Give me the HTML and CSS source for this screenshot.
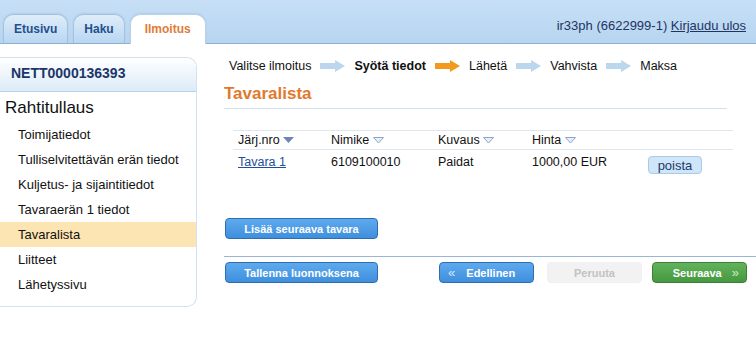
FILE: index.html
```html
<!DOCTYPE html>
<html lang="fi">
<head>
  <meta charset="UTF-8">
  <title>Ilmoitus - Tavaralista</title>
  <link rel="stylesheet" href="styles.css">
</head>
<body>
  <div class="topbar">
    <div class="tabs">
      <div class="tab">Etusivu</div>
      <div class="tab">Haku</div>
      <div class="tab active">Ilmoitus</div>
    </div>
    <div class="user">ir33ph (6622999-1) <a href="#">Kirjaudu ulos</a></div>
  </div>

  <div class="page">
    <div class="sidebar">
      <div class="side-head">NETT0000136393</div>
      <div class="side-title">Rahtitullaus</div>
      <ul class="side-list">
        <li>Toimijatiedot</li>
        <li>Tulliselvitettävän erän tiedot</li>
        <li>Kuljetus- ja sijaintitiedot</li>
        <li>Tavaraerän 1 tiedot</li>
        <li class="current">Tavaralista</li>
        <li>Liitteet</li>
        <li>Lähetyssivu</li>
      </ul>
    </div>

    <div class="main">
      <div class="steps">
        <span>Valitse ilmoitus</span>
        <svg class="arrow" width="25" height="12" viewBox="0 0 25 12"><polygon points="0,3 15,3 15,0 25,6 15,12 15,9 0,9" fill="#bcd6ee"/></svg>
        <span class="now">Syötä tiedot</span>
        <svg class="arrow" width="25" height="12" viewBox="0 0 25 12"><polygon points="0,3 15,3 15,0 25,6 15,12 15,9 0,9" fill="#f29a1c"/></svg>
        <span>Lähetä</span>
        <svg class="arrow" width="25" height="12" viewBox="0 0 25 12"><polygon points="0,3 15,3 15,0 25,6 15,12 15,9 0,9" fill="#bcd6ee"/></svg>
        <span>Vahvista</span>
        <svg class="arrow" width="25" height="12" viewBox="0 0 25 12"><polygon points="0,3 15,3 15,0 25,6 15,12 15,9 0,9" fill="#bcd6ee"/></svg>
        <span>Maksa</span>
      </div>

      <h2 class="title">Tavaralista</h2>

      <table class="goods">
        <thead>
          <tr>
            <th class="c1">Järj.nro <svg width="11" height="7" viewBox="0 0 11 7"><polygon points="0,0 11,0 5.5,6" fill="#6d86b8"/></svg></th>
            <th class="c2">Nimike <svg width="11" height="7" viewBox="0 0 11 7"><polygon points="0.5,0.5 10.5,0.5 5.5,6" fill="#e9eff8" stroke="#8ea5cb"/></svg></th>
            <th class="c3">Kuvaus <svg width="11" height="7" viewBox="0 0 11 7"><polygon points="0.5,0.5 10.5,0.5 5.5,6" fill="#e9eff8" stroke="#8ea5cb"/></svg></th>
            <th class="c4">Hinta <svg width="11" height="7" viewBox="0 0 11 7"><polygon points="0.5,0.5 10.5,0.5 5.5,6" fill="#e9eff8" stroke="#8ea5cb"/></svg></th>
            <th></th>
          </tr>
        </thead>
        <tbody>
          <tr>
            <td><a href="#">Tavara 1</a></td>
            <td>6109100010</td>
            <td>Paidat</td>
            <td>1000,00 EUR</td>
            <td><button class="small">poista</button></td>
          </tr>
        </tbody>
      </table>

      <button class="btn blue wide add">Lisää seuraava tavara</button>

      <div class="actions">
        <button class="btn blue wide">Tallenna luonnoksena</button>
        <button class="btn blue nav prev"><span class="chev">«</span> Edellinen</button>
        <button class="btn off nav">Peruuta</button>
        <button class="btn green nav next">Seuraava <span class="chev">»</span></button>
      </div>
    </div>
  </div>
</body>
</html>
```

FILE: styles.css
```css
body { margin: 0; font-family: "Liberation Sans", Arial, sans-serif; font-size: 13px; color: #111; background: #fff; }

.topbar { height: 43px; display: flex; align-items: flex-end; justify-content: space-between; background: linear-gradient(#c6dff6, #b7d5f1); border-bottom: 1px solid #8eafd0; }
.tabs { display: flex; gap: 5px; padding-left: 3px; margin-bottom: -1px; }
.tab { height: 28px; line-height: 28px; padding: 0 10px; font-size: 12px; font-weight: bold; color: #234f8c; background: linear-gradient(#dfedf9, #b9d6f1); border: 1px solid #a3c2df; border-bottom: none; border-radius: 10px 10px 0 0; box-shadow: 0 -1px 2px #0001; }
.tab.active { background: #fff; color: #e07b39; padding: 0 14px 1px; border-color: #b7d1ea; }
.user { align-self: center; margin-top: 8px; padding-right: 10px; color: #1f3561; }
.user a { color: #1f3561; }

.page { display: flex; }

.sidebar { width: 196px; margin-top: 13px; border: 1px solid #d3e2f0; border-left: none; border-radius: 0 10px 10px 0; padding-bottom: 9px; align-self: flex-start; }
.side-head { height: 33px; line-height: 31px; padding-left: 11px; font-size: 14px; font-weight: bold; color: #1b3768; background: linear-gradient(#fff, #dcebf8); border-bottom: 1px solid #b9d3ea; border-radius: 0 10px 0 0; }
.side-title { font-size: 17px; line-height: 28px; padding: 2px 0 0 5px; }
.side-list { list-style: none; margin: 0; padding: 0; }
.side-list li { height: 25px; line-height: 25px; padding-left: 18px; }
.side-list li.current { background: #fde4b3; }

.main { flex: 1; margin-left: 27px; }

.steps { display: flex; align-items: center; gap: 8px; height: 16px; margin-top: 14px; padding-left: 5px; font-size: 12.5px; }
.steps .now { font-weight: bold; }
.steps .arrow { margin: 0 1px; }

.title { margin: 10px 0 0; font-size: 17px; line-height: 20px; color: #e07a2e; padding-bottom: 4px; border-bottom: 1px solid #d3e1ee; width: 503px; }

.goods { margin: 21px 0 0 9px; width: 500px; border-collapse: collapse; border-top: 1px solid #dfe6ee; font-size: 12.5px; }
.goods th { text-align: left; font-weight: normal; height: 18px; padding: 0 5px; border-bottom: 1px solid #dfe6ee; white-space: nowrap; }
.goods th svg { vertical-align: 0; }
.goods td { height: 22px; padding: 0 5px; vertical-align: middle; }
.goods .c1 { width: 83px; }
.goods .c2 { width: 97px; }
.goods .c3 { width: 84px; }
.goods .c4 { width: 106px; }
.goods a { color: #1f4f9a; }
.small { margin-top: 6px; height: 18px; width: 54px; padding: 0; font-family: inherit; font-size: 13px; color: #1d3b6e; background: #cfe5f8; border: 1px solid #a9cbe9; border-radius: 4px; }

.btn { height: 21px; padding: 0; font-family: inherit; font-size: 11px; font-weight: bold; color: #fff; border-radius: 4px; border: 1px solid #2f6db1; }
.btn.blue { background: linear-gradient(#5eaaee, #3f8fdd); }
.btn.green { background: linear-gradient(#62b45c, #45983f); border-color: #3a7f35; }
.btn.off { background: #f2f2f2; color: #c2c2c2; border-color: #f0f0f0; }
.btn.wide { width: 153px; }
.btn.nav { width: 95px; }
.btn .chev { font-weight: normal; font-size: 13px; color: #d8e9fa; }
.btn.prev { text-align: left; padding-left: 8px; }
.btn.prev .chev { margin-right: 8px; }
.btn.next { text-align: right; padding-right: 7px; }
.btn.next .chev { margin-left: 7px; color: #c9ecc5; }

.add { display: block; margin: 44px 0 0 1px; }

.actions { display: flex; align-items: center; margin-top: 17px; padding: 5px 9px 0 1px; border-top: 1px solid #9ab6d2; }
.actions .prev { margin-left: 61px; }
.actions .off { margin-left: 13px; }
.actions .next { margin-left: 10px; }
```
